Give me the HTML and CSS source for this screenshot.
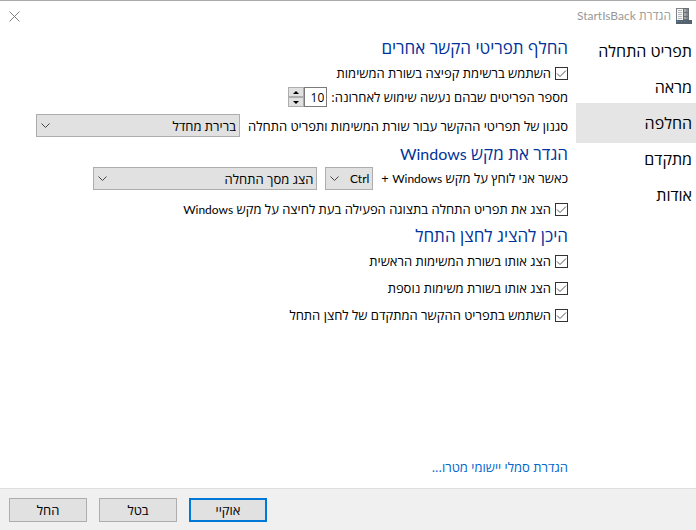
FILE: index.html
```html
<!DOCTYPE html>
<html lang="he" dir="rtl">
<head>
  <meta charset="UTF-8">
  <title>הגדרת StartIsBack</title>
  <meta name="viewport" content="width=device-width, initial-scale=1.0">
  <link rel="stylesheet" href="styles.css">
</head>
<body>
  <header class="titlebar">
    <svg class="app-icon" width="16" height="16" viewBox="0 0 16 16" shape-rendering="crispEdges" aria-hidden="true">
      <rect x="0" y="0" width="13" height="13" fill="#7d8388"/>
      <rect x="1" y="1" width="6" height="11" fill="#f6f7f4"/>
      <path d="M2 2h4v1H2zM2 4h4v1H2zM2 6h4v1H2zM2 8h4v1H2zM2 10h4v1H2z" fill="#b4bbc0"/>
      <rect x="7" y="0" width="6" height="12" fill="#6a6f73"/>
      <path d="M8 1h2v3H8zM8 5h2v3H8zM8 9h2v2H8z" fill="#a3a8ab"/>
      <path d="M10 1h2v3h-2zM10 5h2v3h-2zM10 9h2v2h-2z" fill="#85898d"/>
      <rect x="0" y="12" width="16" height="4" fill="#56616c"/>
      <path d="M1 13h2v1H1zM5 13h1v1H5zM8 13h1v1H8z" fill="#3f86c8"/>
    </svg>
    <span class="title">הגדרת <span lang="en">StartIsBack</span></span>
    <button class="close" type="button" aria-label="סגור">
      <svg width="11" height="11" viewBox="0 0 11 11"><path d="M.5 .5l10 10M10.500 .5l-10 10" stroke="#808080" fill="none"/></svg>
    </button>
  </header>

  <div class="main">
    <nav class="sidebar">
      <a href="#">תפריט התחלה</a>
      <a href="#">מראה</a>
      <a href="#" class="active">החלפה</a>
      <a href="#">מתקדם</a>
      <a href="#">אודות</a>
    </nav>

    <form class="content" id="settings">
      <h2>החלף תפריטי הקשר אחרים</h2>
      <label class="row check"><input type="checkbox" checked> השתמש ברשימת קפיצה בשורת המשימות</label>
      <div class="row count">
        <label for="count">מספר הפריטים שבהם נעשה שימוש לאחרונה:</label>
        <div class="spinner">
          <input type="text" id="count" value="10">
          <div class="steps">
            <button type="button" aria-label="הגדל"><svg width="6" height="3" viewBox="0 0 6 3"><path d="M0 3L3 0L6 3z"/></svg></button>
            <button type="button" aria-label="הקטן"><svg width="6" height="3" viewBox="0 0 6 3"><path d="M0 0L3 3L6 0z"/></svg></button>
          </div>
        </div>
      </div>
      <div class="row spaced">
        <label for="style">סגנון של תפריטי ההקשר עבור שורת המשימות ותפריט התחלה</label>
        <div class="select select-style">
          <select id="style"><option>ברירת מחדל</option></select>
          <svg width="9" height="6" viewBox="0 0 9 6"><path d="M.5 .5l4 4l4-4"/></svg>
        </div>
      </div>

      <h2>הגדר את מקש <span lang="en">Windows</span></h2>
      <div class="row combo">
        <label for="modifier">כאשר אני לוחץ על מקש <span lang="en">Windows</span> +</label>
        <div class="select select-key">
          <select id="modifier" lang="en"><option>Ctrl</option></select>
          <svg width="9" height="6" viewBox="0 0 9 6"><path d="M.5 .5l4 4l4-4"/></svg>
        </div>
        <div class="select select-action">
          <select aria-label="פעולה"><option>הצג מסך התחלה</option></select>
          <svg width="9" height="6" viewBox="0 0 9 6"><path d="M.5 .5l4 4l4-4"/></svg>
        </div>
      </div>
      <label class="row check spaced"><input type="checkbox" checked> <span>הצג את תפריט התחלה בתצוגה הפעילה בעת לחיצה על מקש <span lang="en">Windows</span></span></label>

      <h2>היכן להציג לחצן התחל</h2>
      <label class="row check"><input type="checkbox" checked> הצג אותו בשורת המשימות הראשית</label>
      <label class="row check spaced"><input type="checkbox" checked> הצג אותו בשורת משימות נוספת</label>
      <label class="row check spaced"><input type="checkbox" checked> השתמש בתפריט ההקשר המתקדם של לחצן התחל</label>

      <a class="link" href="#">הגדרת סמלי יישומי מטרו...</a>
    </form>
  </div>

  <footer class="footer">
    <button type="submit" form="settings" class="primary">אוקיי</button>
    <button type="button">בטל</button>
    <button type="button">החל</button>
  </footer>
</body>
</html>
```
FILE: styles.css
```css
* {
  box-sizing: border-box;
}

body {
  margin: 0;
  min-height: 100vh;
  display: flex;
  flex-direction: column;
  border-top: 1px solid #a9a9a9;
  background: #fff;
  color: #000;
  font-family: "Open Sans", "Noto Sans", sans-serif;
  font-size: 13px;
  line-height: 16px;
}

button,
input,
select {
  font: inherit;
  color: inherit;
}

[lang="en"] {
  font-family: Lato, "Open Sans", sans-serif;
  font-size: 12px;
}

/* title bar */
.titlebar {
  display: flex;
  align-items: center;
  height: 30px;
  padding: 0 4px 0 9px;
  gap: 5px;
  color: #999;
  font-size: 12px;
}

.close {
  display: flex;
  margin-right: auto;
  padding: 0;
  border: none;
  background: none;
}

.main {
  flex: 1;
  display: flex;
}

/* side navigation */
.sidebar {
  width: 120px;
  display: flex;
  flex-direction: column;
}

.sidebar a {
  height: 40px;
  margin-bottom: -4px;
  padding-right: 4px;
  color: #000;
  font-size: 16px;
  line-height: 40px;
  text-decoration: none;
}

.sidebar .active {
  background: #e5e5e5;
}

/* settings */
.content {
  flex: 1;
  display: flex;
  flex-direction: column;
  align-items: flex-start;
  padding: 4px 8px 13px;
}

h2 {
  margin: 4px 0 0;
  color: #003399;
  font-size: 17px;
  font-weight: 400;
  line-height: 26px;
}

h2 [lang="en"] {
  font-size: 16px;
}

h2:first-child {
  margin-top: 0;
}

.row {
  display: flex;
  align-items: center;
  gap: 8px;
  min-height: 20px;
  margin-top: 4px;
  white-space: nowrap;
}

.spaced {
  margin-top: 7px;
}

.check,
.count {
  gap: 4px;
}

h2 + .check {
  margin-top: 2px;
}

.combo {
  margin-top: 0;
}

.combo + .check {
  margin-top: 9px;
}

input[type="checkbox"] {
  appearance: none;
  width: 13px;
  height: 13px;
  margin: 0;
  border: 1px solid #333;
  background: #fff;
}

input[type="checkbox"]:checked {
  background: #fff url("data:image/svg+xml,%3Csvg xmlns='http://www.w3.org/2000/svg' width='11' height='11'%3E%3Cpath d='M1 5.500l3 3l6-6' fill='none' stroke='%23555'/%3E%3C/svg%3E") no-repeat center;
}

.spinner {
  display: flex;
}

.spinner input {
  width: 23px;
  height: 20px;
  padding: 0 2px;
  border: 1px solid #7a7a7a;
  background: #fff;
  font-size: 12px;
  direction: ltr;
  text-align: right;
}

.steps {
  display: flex;
  flex-direction: column;
  width: 16px;
}

.steps button {
  flex: 1;
  display: flex;
  align-items: center;
  justify-content: center;
  padding: 0;
  border: 1px solid #adadad;
  background: #e1e1e1;
}

.select {
  position: relative;
  display: flex;
}

.select select {
  appearance: none;
  width: 100%;
  height: 23px;
  padding: 0 3px;
  border: 1px solid #adadad;
  border-radius: 0;
  background: #e1e1e1;
}

.select svg {
  position: absolute;
  left: 5px;
  top: 9px;
  fill: none;
  stroke: #444;
  pointer-events: none;
}

.select-style {
  width: 204px;
}

.select-key {
  width: 48px;
}

.select-action {
  width: 224px;
}

.link {
  margin-top: auto;
  color: #0066cc;
  text-decoration: none;
}

/* bottom buttons */
.footer {
  display: flex;
  justify-content: flex-end;
  gap: 12px;
  padding: 9px 9px 8px;
  border-top: 1px solid #dfdfdf;
  background: #f0f0f0;
}

.footer button {
  width: 78px;
  height: 24px;
  padding: 0;
  border: 1px solid #adadad;
  background: #e1e1e1;
}

.footer .primary {
  border: 2px solid #0078d7;
}
```
